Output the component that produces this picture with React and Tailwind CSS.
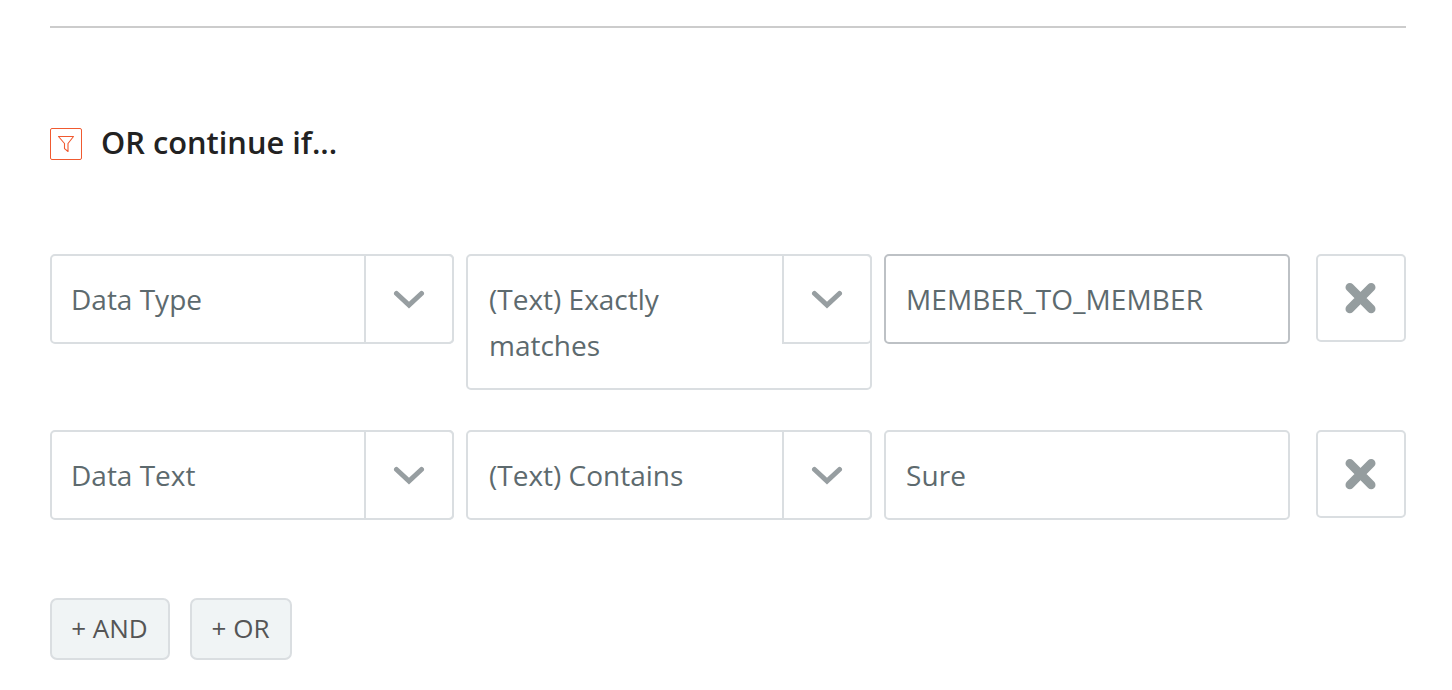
const rules = [
  { field: 'Data Type', operator: '(Text) Exactly matches', value: 'MEMBER_TO_MEMBER', active: true },
  { field: 'Data Text', operator: '(Text) Contains', value: 'Sure', active: false },
]

function FilterIcon() {
  return (
    <span className="flex size-8 items-center justify-center rounded-[2px] border border-[#f05a30]">
      <svg className="size-[18px]" viewBox="0 0 18 18" fill="none" stroke="#f05a30" strokeWidth="1.1" strokeLinejoin="round">
        <path d="M1.5 1.5h15l-5.5 7v8l-3.5-2.9V8.5z" />
      </svg>
    </span>
  )
}

function Select({ label, className }) {
  return (
    <div className={`flex items-start rounded-[5px] border-2 border-[#dadee1] bg-white ${className}`}>
      <span className="flex-1 py-5 pr-20">{label}</span>
      <button className="-m-0.5 flex h-[90px] w-[90px] shrink-0 items-center justify-center rounded-r-[5px] border-2 border-[#dadee1]">
        <svg className="h-5 w-8" viewBox="0 0 32 20" fill="none" stroke="#979ea1" strokeWidth="5" strokeLinecap="round">
          <path d="M3.5 4.5 16 16 28.5 4.5" />
        </svg>
      </button>
    </div>
  )
}

function RuleRow({ rule }) {
  return (
    <div className="flex items-start">
      <Select label={rule.field} className="w-[404px] pl-[19px]" />
      <Select label={rule.operator} className="ml-3 w-[406px] pl-[21px]" />
      <input
        className={`ml-3 h-[90px] w-[406px] rounded-[5px] border-2 bg-white px-5 tracking-[0.1px] outline-none ${
          rule.active ? 'border-[#bdc1c5]' : 'border-[#dadee1]'
        }`}
        defaultValue={rule.value}
      />
      <button className="ml-[26px] flex h-[88px] w-[90px] items-center justify-center rounded-[5px] border-2 border-[#dadee1] bg-white">
        <svg className="size-8" viewBox="0 0 32 32" fill="none" stroke="#959d9f" strokeWidth="8.6" strokeLinecap="round">
          <path d="m4.8 5.3 21.4 21.6M26.2 5.3 4.8 26.9" />
        </svg>
      </button>
    </div>
  )
}

export default function App() {
  return (
    <div className="min-h-screen bg-white pt-[26px] pr-[46px] pl-[50px] font-['Open_Sans',sans-serif] text-[28px] leading-[46px] text-[#5d6a6e]">
      <hr className="border-t-2 border-[#cccccc]" />

      <div className="mt-[93px] flex items-center gap-[19px]">
        <FilterIcon />
        <h2 className="pb-1 text-[30.8px] leading-[42px] font-semibold text-[#222222]">OR continue if...</h2>
      </div>

      <div className="mt-[87px] flex flex-col gap-10">
        {rules.map((rule) => (
          <RuleRow key={rule.field} rule={rule} />
        ))}
      </div>

      <div className="mt-[78px] flex gap-5 text-[26px] leading-[56px] text-[#555555]">
        <button className="h-[62px] w-[120px] rounded-[7px] border-2 border-[#dadee1] bg-[#f0f4f5] pr-px pb-0.5">+ AND</button>
        <button className="h-[62px] w-[102px] rounded-[7px] border-2 border-[#dadee1] bg-[#f0f4f5] pr-px pb-0.5">+ OR</button>
      </div>
    </div>
  )
}
